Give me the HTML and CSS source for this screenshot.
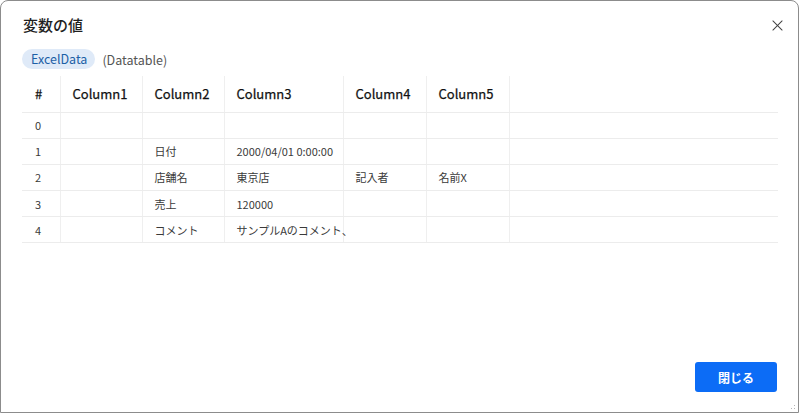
FILE: index.html
```html
<!DOCTYPE html>
<html lang="ja">
<head>
    <meta charset="UTF-8">
    <meta name="viewport" content="width=device-width, initial-scale=1.0">
    <title>変数の値</title>
    <link rel="stylesheet" href="styles.css">
</head>
<body>
    <div class="dialog">
        <div class="dialog-header">
            <h1>変数の値</h1>
            <button class="close-btn" aria-label="閉じる">
                <svg viewBox="0 0 12 12" fill="none" stroke="currentColor" stroke-width="1.1" stroke-linecap="round">
                    <line x1="1" y1="1" x2="11" y2="11"></line>
                    <line x1="11" y1="1" x2="1" y2="11"></line>
                </svg>
            </button>
        </div>

        <div class="var-info">
            <span class="var-name">ExcelData</span>
            <span class="var-type">(Datatable)</span>
        </div>

        <table class="data-table">
            <colgroup>
                <col class="col-num">
                <col class="col-1">
                <col class="col-2">
                <col class="col-3">
                <col class="col-4">
                <col class="col-5">
                <col>
            </colgroup>
            <thead>
                <tr>
                    <th>#</th>
                    <th>Column1</th>
                    <th>Column2</th>
                    <th>Column3</th>
                    <th>Column4</th>
                    <th>Column5</th>
                    <th class="filler"></th>
                </tr>
            </thead>
            <tbody>
                <tr>
                    <td>0</td><td></td><td></td><td></td><td></td><td></td><td class="filler"></td>
                </tr>
                <tr>
                    <td>1</td><td></td><td>日付</td><td>2000/04/01 0:00:00</td><td></td><td></td><td class="filler"></td>
                </tr>
                <tr>
                    <td>2</td><td></td><td>店舗名</td><td>東京店</td><td>記入者</td><td>名前X</td><td class="filler"></td>
                </tr>
                <tr>
                    <td>3</td><td></td><td>売上</td><td>120000</td><td></td><td></td><td class="filler"></td>
                </tr>
                <tr>
                    <td>4</td><td></td><td>コメント</td><td>サンプルAのコメント、</td><td></td><td></td><td class="filler"></td>
                </tr>
            </tbody>
        </table>

        <div class="dialog-footer">
            <button class="primary-btn">閉じる</button>
        </div>

        <span class="grip"></span>
    </div>
</body>
</html>
```

FILE: styles.css
```css
* {
    margin: 0;
    padding: 0;
    box-sizing: border-box;
}

body {
    background: #ffffff;
    font-family: "Noto Sans CJK JP", "Noto Sans", sans-serif;
    color: #242424;
}

.dialog {
    position: relative;
    width: 799px;
    height: 413px;
    border: 1px solid #8c8c8c;
    border-radius: 8px 8px 0 0;
    background: #ffffff;
    padding: 0 20px 20px 21px;
    display: flex;
    flex-direction: column;
}

.dialog-header {
    display: flex;
    align-items: center;
    justify-content: space-between;
    padding-top: 12px;
    height: 36px;
}

.dialog-header h1 {
    font-size: 15px;
    font-weight: 500;
    line-height: 24px;
    color: #1f1f1f;
    margin-left: 1px;
}

.close-btn {
    width: 24px;
    height: 24px;
    margin-right: -11px;
    border: none;
    background: none;
    color: #424242;
    display: flex;
    align-items: center;
    justify-content: center;
    cursor: pointer;
}

.close-btn svg {
    width: 11px;
    height: 11px;
}

.var-info {
    display: flex;
    align-items: center;
    gap: 7px;
    margin-top: 12px;
    height: 20px;
}

.var-name {
    background: #dfeaf8;
    color: #1d5fa6;
    font-size: 12.5px;
    line-height: 20px;
    padding: 0 8px 0 9px;
    border-radius: 10px;
}

.var-type {
    font-size: 12.5px;
    color: #555555;
}

.data-table {
    margin-top: 7px;
    width: 100%;
    border-collapse: collapse;
    table-layout: fixed;
}

.col-num { width: 38px; }
.col-1 { width: 82px; }
.col-2 { width: 82px; }
.col-3 { width: 119px; }
.col-4 { width: 83px; }
.col-5 { width: 83px; }

.data-table th,
.data-table td {
    text-align: left;
    padding: 0 0 0 12px;
    border-right: 1px solid #efefef;
    border-bottom: 1px solid #ececec;
    white-space: nowrap;
}

.data-table th {
    height: 36px;
    font-size: 13px;
    font-weight: 400;
    color: #111111;
    -webkit-text-stroke: 0.25px #111111;
}

.data-table td {
    height: 26.2px;
    font-size: 11px;
    color: #3a3a3a;
}

.data-table th:first-child,
.data-table td:first-child {
    padding-left: 13px;
}

.data-table .filler {
    border-right: none;
}

.dialog-footer {
    margin-top: auto;
    display: flex;
    justify-content: flex-end;
}

.primary-btn {
    width: 82px;
    height: 30px;
    margin-right: 1px;
    border: none;
    border-radius: 3px;
    background: #0c6cf6;
    color: #ffffff;
    font-family: inherit;
    font-size: 12px;
    font-weight: 700;
    cursor: pointer;
}

.grip {
    position: absolute;
    right: 1px;
    bottom: 1px;
    width: 10px;
    height: 10px;
    background: radial-gradient(circle, #b5b5b5 0.8px, transparent 1px) 0 0 / 3px 3px;
    clip-path: polygon(100% 0, 100% 100%, 0 100%);
}
```
